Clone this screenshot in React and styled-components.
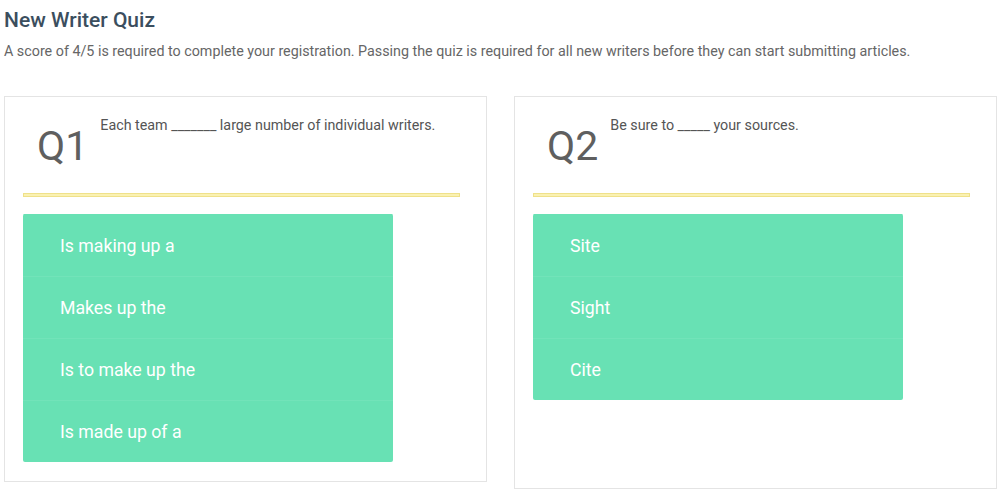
import React from "react";
import styled, { createGlobalStyle } from "styled-components";

const GlobalStyle = createGlobalStyle`
  body {
    margin: 0;
    background: #fff;
    font-family: Roboto, "Liberation Sans", sans-serif;
  }
`;

const Page = styled.main`
  padding: 8px 4px 0 4px;
`;

const Title = styled.h1`
  margin: 0;
  font-size: 21px;
  font-weight: 500;
  line-height: 24px;
  color: #3b4e5e;
`;

const Intro = styled.p`
  margin: 10px 0 0 0;
  font-size: 14.3px;
  line-height: 18px;
  color: #666;
`;

const Grid = styled.section`
  display: grid;
  grid-template-columns: 483px 483px;
  column-gap: 27px;
  align-items: start;
  margin-top: 36px;
`;

const Card = styled.article`
  box-sizing: border-box;
  min-height: ${(p) => p.$minHeight}px;
  padding: 0 18px 18px 18px;
  border: 1px solid #e4e4e4;
  background: #fff;
`;

const Header = styled.header`
  display: flex;
  align-items: flex-start;
  height: 96px;
  padding-left: 14px;
`;

const Number = styled.span`
  margin-top: 24px;
  font-size: 41px;
  font-weight: 400;
  line-height: 50px;
  color: #5f5f5f;
`;

const Question = styled.span`
  margin: 19px 0 0 12px;
  font-size: 14.3px;
  line-height: 18px;
  color: #555;
`;

const Divider = styled.div`
  box-sizing: border-box;
  width: 437px;
  height: 4px;
  border: 1px solid #efe18a;
  background: #faf1b2;
`;

const Options = styled.div`
  display: flex;
  flex-direction: column;
  width: 370px;
  margin-top: 17px;
  border-radius: 2px;
  overflow: hidden;
`;

const Option = styled.button`
  display: flex;
  align-items: center;
  height: 62px;
  padding: 0 0 0 37px;
  border: none;
  border-top: 1px solid ${(p) => (p.$first ? "#68e1b4" : "#72e3b9")};
  background: #68e1b4;
  color: #fff;
  font-family: Roboto, "Liberation Sans", sans-serif;
  font-size: 17.7px;
  text-align: left;
  cursor: pointer;
`;

const quiz = [
  {
    n: "Q1",
    q: "Each team _______ large number of individual writers.",
    options: ["Is making up a", "Makes up the", "Is to make up the", "Is made up of a"],
    minHeight: 386,
  },
  {
    n: "Q2",
    q: "Be sure to _____ your sources.",
    options: ["Site", "Sight", "Cite"],
    minHeight: 393,
  },
];

export default function App() {
  return (
    <>
      <GlobalStyle />
      <Page>
        <Title>New Writer Quiz</Title>
        <Intro>
          A score of 4/5 is required to complete your registration. Passing the quiz is
          required for all new writers before they can start submitting articles.
        </Intro>
        <Grid>
          {quiz.map((item) => (
            <Card key={item.n} $minHeight={item.minHeight}>
              <Header>
                <Number>{item.n}</Number>
                <Question>{item.q}</Question>
              </Header>
              <Divider />
              <Options>
                {item.options.map((o, i) => (
                  <Option key={o} $first={i === 0}>
                    {o}
                  </Option>
                ))}
              </Options>
            </Card>
          ))}
        </Grid>
      </Page>
    </>
  );
}
